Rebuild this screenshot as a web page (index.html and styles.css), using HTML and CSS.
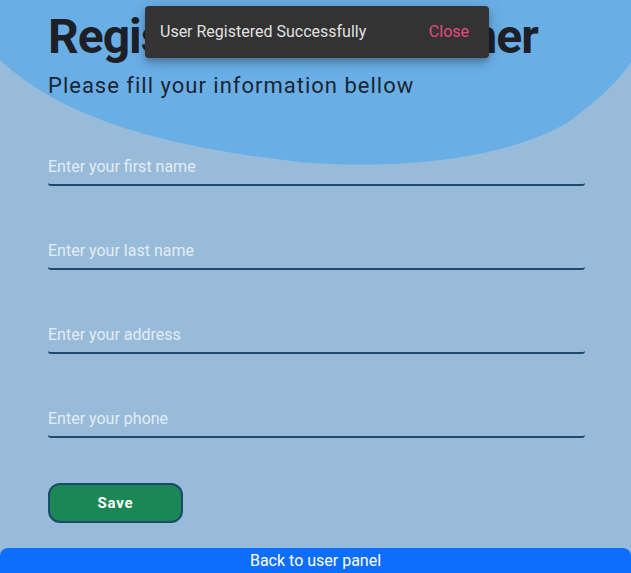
FILE: index.html
```html
<!DOCTYPE html>
<html>
<head>
<meta charset="utf-8">
<link rel="stylesheet" href="styles.css">
</head>
<body>
<svg class="blob" width="631" height="200" viewBox="0 0 631 200" preserveAspectRatio="none">
  <path d="M0 0 V60 C 60 115, 150 145, 300 162 C 420 172, 520 152, 568 122 C 598 100, 618 82, 631 62 V0 Z" fill="#6aaee6"/>
</svg>
<main class="page">
  <h1 class="title">Register New Customer</h1>
  <p class="subtitle">Please fill your information bellow</p>
  <form class="form">
    <input class="field" type="text" placeholder="Enter your first name">
    <input class="field" type="text" placeholder="Enter your last name">
    <input class="field" type="text" placeholder="Enter your address">
    <input class="field" type="text" placeholder="Enter your phone">
    <button class="save" type="button">Save</button>
  </form>
</main>
<a class="back" href="#">Back to user panel</a>
<div class="toast">
  <span class="toast-msg">User Registered Successfully</span>
  <span class="toast-close">Close</span>
</div>
</body>
</html>
```
FILE: styles.css
```css
html, body {
  margin: 0;
  padding: 0;
}
body {
  width: 631px;
  height: 573px;
  background: #97bbd8;
  font-family: Roboto, "Liberation Sans", sans-serif;
  position: relative;
  overflow: hidden;
}
.blob {
  position: absolute;
  left: 0;
  top: 0;
  z-index: 0;
}
.page {
  position: relative;
  z-index: 1;
  padding: 8px 46px 0 48px;
}
.title {
  margin: 0;
  font-size: 48px;
  font-weight: 700;
  line-height: 58px;
  letter-spacing: -1px;
  color: #1d2127;
}
.subtitle {
  margin: 0;
  font-size: 22px;
  line-height: 40px;
  letter-spacing: 1px;
  color: #1a2533;
}
.form {
  display: flex;
  flex-direction: column;
  align-items: flex-start;
  margin-top: 40px;
}
.field {
  width: 537px;
  box-sizing: border-box;
  height: 40px;
  margin-bottom: 44px;
  padding: 2px 0 0 0;
  border: none;
  border-bottom: 2px solid #1d4a6c;
  border-radius: 0 0 3px 3px;
  background: transparent;
  font-family: Roboto, "Liberation Sans", sans-serif;
  font-size: 16px;
  color: #1a2533;
  outline: none;
}
.field::placeholder {
  color: #e3edf5;
}
.save {
  width: 135px;
  height: 40px;
  margin-top: 1px;
  background: #1b8754;
  border: 2px solid #1b4a6a;
  border-radius: 12px;
  color: #fff;
  font-family: Roboto, "Liberation Sans", sans-serif;
  font-weight: 700;
  font-size: 15px;
  letter-spacing: 0.8px;
}
.back {
  position: absolute;
  left: 0;
  bottom: 0;
  width: 631px;
  height: 25px;
  line-height: 25px;
  background: #0d6efd;
  border-radius: 8px 8px 0 0;
  color: #fff;
  text-align: center;
  text-decoration: none;
  font-size: 16px;
}
.toast {
  position: absolute;
  left: 145px;
  top: 6px;
  width: 344px;
  height: 52px;
  box-sizing: border-box;
  padding: 0 20px 2px 15px;
  display: flex;
  align-items: center;
  justify-content: space-between;
  background: #333333;
  border-radius: 4px;
  box-shadow: 0 3px 5px -1px rgba(0,0,0,.2), 0 6px 10px 0 rgba(0,0,0,.14), 0 1px 18px 0 rgba(0,0,0,.12);
  z-index: 5;
  font-size: 16px;
}
.toast-msg {
  color: rgba(255,255,255,.87);
}
.toast-close {
  color: #e24a7d;
}
```
